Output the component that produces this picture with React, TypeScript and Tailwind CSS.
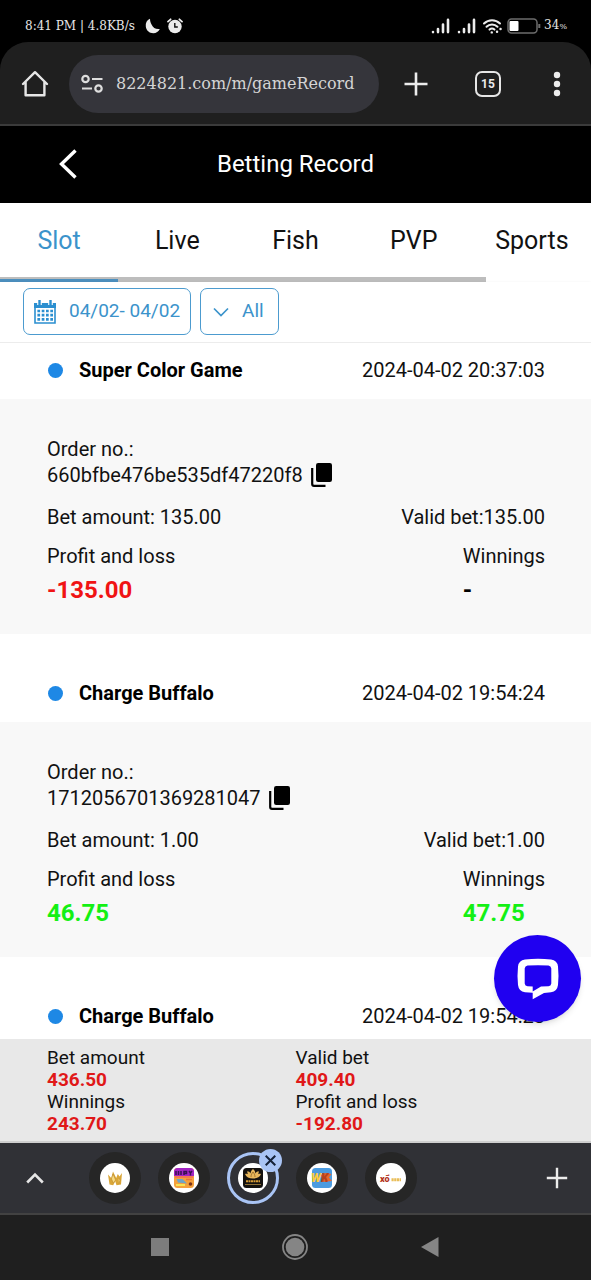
import React from "react";

type GameRecord = {
  game: string;
  time: string;
  order: string;
  bet: string;
  valid: string;
  profit: string;
  winnings: string;
};

const records: GameRecord[] = [
  {
    game: "Super Color Game",
    time: "2024-04-02 20:37:03",
    order: "660bfbe476be535df47220f8",
    bet: "135.00",
    valid: "135.00",
    profit: "-135.00",
    winnings: "-",
  },
  {
    game: "Charge Buffalo",
    time: "2024-04-02 19:54:24",
    order: "1712056701369281047",
    bet: "1.00",
    valid: "1.00",
    profit: "46.75",
    winnings: "47.75",
  },
];

const totals = [
  { label: "Bet amount", value: "436.50" },
  { label: "Valid bet", value: "409.40" },
  { label: "Winnings", value: "243.70" },
  { label: "Profit and loss", value: "-192.80" },
];

const categories = ["Slot", "Live", "Fish", "PVP", "Sports"];

function amountColor(value: string) {
  if (value === "-") return "text-black";
  return value.startsWith("-") ? "text-[#f01414]" : "text-[#14f014]";
}

function SignalIcon() {
  return (
    <svg width="20" height="16" viewBox="0 0 20 16" stroke="#ececec" strokeWidth="2.6" strokeLinecap="round" aria-hidden="true">
      <path d="M2 14v.1M7 11v3.1M12 6.5v7.600M17 1.900v12.200" />
    </svg>
  );
}

function StatusBar() {
  return (
    <div className="flex h-[42px] shrink-0 items-center justify-between pt-[10px] pl-[25px] pr-6 font-['DejaVu_Serif',serif] text-[#e6e6e6]">
      <div className="flex items-center">
        <span className="text-xs leading-4 whitespace-pre">8:41 PM | 4.8KB/s</span>
        <svg className="ml-[10px]" width="16" height="16" viewBox="0 0 16 16" fill="#ececec" aria-hidden="true">
          <path d="M5 .8C1.800 2.200.4 5 .8 8.500c.5 4 3.600 6.700 7.500 6.700 3 0 5.300-1.500 6.500-4.200-3.800.6-6.800-1-8.100-4.200C5.500 4.800 5 2.800 5 .8Z" />
        </svg>
        <svg className="ml-[6px]" width="16" height="16" viewBox="0 0 16 16" aria-hidden="true">
          <circle cx="8" cy="8.500" r="6.700" fill="#ececec" />
          <path d="M1 3.600 3.600 1.300M15 3.600 12.400 1.300" stroke="#ececec" strokeWidth="1.800" strokeLinecap="round" />
          <path d="M7.800 5v4h3" stroke="#111" strokeWidth="1.400" fill="none" />
        </svg>
      </div>
      <div className="flex items-center">
        <SignalIcon />
        <span className="ml-[6px] flex">
          <SignalIcon />
        </span>
        <svg className="ml-[5px]" width="21" height="16" viewBox="0 0 21 16" fill="none" stroke="#ececec" strokeWidth="2" strokeLinecap="round" aria-hidden="true">
          <path d="M2 5.500c4.500-4.500 11.500-4.500 16 0M4.500 8.800c3-3 8-3 11 0M7.500 11.600c1.500-1.400 3.500-1.400 5 0" />
          <path d="M9.700 14.400h.1M15 13.800h.1M18.500 11h.1" strokeWidth="2.400" />
        </svg>
        <svg className="ml-1" width="34" height="16" viewBox="0 0 34 16" aria-hidden="true">
          <rect x="1" y="1" width="29" height="14" rx="3.500" fill="none" stroke="#6c6c6c" strokeWidth="1.500" />
          <rect x="2.500" y="3" width="9" height="10" rx="1" fill="#fff" />
          <path d="M32.300 6v4" stroke="#6c6c6c" strokeWidth="2" />
        </svg>
        <span className="ml-[3px] text-xs leading-4">
          34<span className="text-[8px]">%</span>
        </span>
      </div>
    </div>
  );
}

function BrowserBar() {
  return (
    <div className="flex h-[84px] shrink-0 items-center rounded-t-[28px] border-b-2 border-[#3b3b3b] bg-[#1f1f1f] pt-[2px] pl-[21px] pr-[30px]">
      <button aria-label="Home" className="flex">
        <svg width="28" height="28" viewBox="0 0 28 28" fill="none" stroke="#e6e6e6" strokeWidth="2.400" strokeLinejoin="round" strokeLinecap="round">
          <path d="M2 14 14 2.200 26 14M4.600 12v13.200h18.800V12" />
        </svg>
      </button>
      <label className="ml-5 flex h-[58px] min-w-0 flex-1 items-center rounded-full bg-[#35353b] pl-3 pr-4">
        <svg className="shrink-0" width="23" height="20" viewBox="0 0 23 20" fill="none" stroke="#dedede" strokeWidth="2.200" aria-hidden="true">
          <circle cx="4.500" cy="5" r="3.200" />
          <circle cx="17.500" cy="14.500" r="3.200" />
          <path d="M11 5h10.500M1 14.500h10" />
        </svg>
        <input
          aria-label="Address"
          defaultValue="8224821.com/m/gameRecord"
          className="ml-3 w-full min-w-0 bg-transparent font-['DejaVu_Serif',serif] text-[16px] text-[#d4d4d4] outline-none"
        />
      </label>
      <button aria-label="New tab" className="ml-[25px] flex">
        <svg width="24" height="24" viewBox="0 0 24 24" stroke="#ececec" strokeWidth="2.600">
          <path d="M12 .5v23M.5 12h23" />
        </svg>
      </button>
      <button aria-label="Open tabs" className="ml-[47px] flex h-[26px] w-[26px] items-center justify-center rounded-[7px] border-2 border-[#e6e6e6] font-[Roboto,sans-serif] text-xs font-bold text-[#ececec]">
        15
      </button>
      <button aria-label="Menu" className="ml-[52px] flex">
        <svg width="8" height="26" viewBox="0 0 8 26" fill="#ececec">
          <circle cx="4" cy="4" r="3.200" />
          <circle cx="4" cy="13" r="3.200" />
          <circle cx="4" cy="22" r="3.200" />
        </svg>
      </button>
    </div>
  );
}

function PageHeader() {
  return (
    <header className="grid h-[77px] shrink-0 grid-cols-5 items-center bg-black pb-[2px] text-white">
      <button aria-label="Back" className="ml-[58px] flex w-5">
        <svg width="20" height="30" viewBox="0 0 20 30" fill="none" stroke="#fff" strokeWidth="3.400">
          <path d="M17.500 1.500 3.500 15l14 13.500" />
        </svg>
      </button>
      <h1 className="col-span-3 text-center text-2xl leading-7">Betting Record</h1>
    </header>
  );
}

function CategoryTabs() {
  return (
    <nav className="shrink-0 bg-white">
      <div className="grid h-[74px] grid-cols-5 pt-[2px]">
        {categories.map((name, i) => (
          <button key={name} className={i === 0 ? "text-[25px] text-[#3b93cb]" : "text-[25px] text-[#111111]"}>
            {name}
          </button>
        ))}
      </div>
      <div className="flex h-[5px] w-[82.2%] items-end bg-[#bdbdbd]">
        <div className="h-[3px] w-[24.3%] bg-[#4c8fbe]" />
      </div>
    </nav>
  );
}

function CalendarIcon() {
  return (
    <svg width="22" height="24" viewBox="0 0 22 24" aria-hidden="true">
      <path d="M0 3h22v5H0z" fill="#2b8fd0" />
      <path d="M1 5v18h20V5" fill="none" stroke="#2b8fd0" strokeWidth="1.600" />
      <path d="M5.500 0v5M16.500 0v5" stroke="#fff" strokeWidth="4.600" />
      <path d="M5.500 0v5M16.500 0v5" stroke="#2b8fd0" strokeWidth="2.400" />
      <g stroke="#2b8fd0" strokeWidth="2.700" strokeDasharray="2.700 1.600">
        <path d="M3.400 11h16M3.400 15.200h16M3.400 19.400h16" />
      </g>
    </svg>
  );
}

function Filters() {
  return (
    <div className="flex h-[61px] shrink-0 items-start gap-[9px] border-b border-[#ececec] bg-white pt-[6px] pl-[23px] shadow-sm">
      <button className="flex h-[47px] items-center gap-[13px] rounded-[7px] border border-[#4c9bcf] px-[10px] text-[19px] text-[#3b93cb]">
        <CalendarIcon />
        04/02- 04/02
      </button>
      <label className="flex h-[47px] items-center gap-[13px] rounded-[7px] border border-[#4c9bcf] px-3 text-[#3b93cb]">
        <svg width="16" height="10" viewBox="0 0 16 10" fill="none" stroke="#3b93cb" strokeWidth="1.700" aria-hidden="true">
          <path d="M1 1.500 8 8.500l7-7" />
        </svg>
        <select aria-label="Status" className="appearance-none bg-transparent pr-[2px] text-[19px] outline-none">
          <option>All</option>
        </select>
      </label>
    </div>
  );
}

function RecordHeading({ game, time }: { game: string; time: string }) {
  return (
    <div className="flex h-14 items-center pr-[46px] pl-12 pb-[2px]">
      <span className="mr-4 h-[15px] w-[15px] rounded-full bg-[#1e88e5]" />
      <h2 className="text-[20px] leading-[26px] font-bold">{game}</h2>
      <time className="ml-auto text-[20px] leading-[26px] text-[#111111]">{time}</time>
    </div>
  );
}

function RecordCard({ record }: { record: GameRecord }) {
  return (
    <article className="mb-8">
      <RecordHeading game={record.game} time={record.time} />
      <div className="bg-[#f8f8f8] pr-[46px] pl-[47px] pt-[37px] pb-[31px] text-[20px] leading-[26px] text-[#111111]">
        <p>Order no.:</p>
        <p className="flex items-center gap-2">
          {record.order}
          <button aria-label="Copy order number" className="flex">
            <svg width="21" height="24" viewBox="0 0 21 24">
              <rect x="5" y="0" width="16" height="19" rx="2.200" fill="#000" />
              <path d="M1.200 5v16a1.800 1.800 0 0 0 1.800 1.800h11.500" fill="none" stroke="#000" strokeWidth="2.200" />
            </svg>
          </button>
        </p>
        <div className="mt-4 flex justify-between">
          <span>Bet amount: {record.bet}</span>
          <span>Valid bet:{record.valid}</span>
        </div>
        <div className="mt-[13px] flex justify-between">
          <div>
            <p>Profit and loss</p>
            <p className={`mt-2 text-[24px] font-bold ${amountColor(record.profit)}`}>{record.profit}</p>
          </div>
          <div>
            <p>Winnings</p>
            <p className={`mt-2 text-[24px] font-bold ${amountColor(record.winnings)}`}>{record.winnings}</p>
          </div>
        </div>
      </div>
    </article>
  );
}

function Totals() {
  return (
    <footer className="grid h-[104px] shrink-0 grid-cols-2 content-start border-b-2 border-[#cfcfcf] bg-[#e8e8e8] pt-2">
      {totals.map((t, i) => (
        <div key={t.label} className={i % 2 === 0 ? "pl-[47px]" : ""}>
          <p className="text-[19px] leading-[22px] text-[#111111]">{t.label}</p>
          <p className="text-[19px] leading-[22px] font-bold text-[#e01818]">{t.value}</p>
        </div>
      ))}
    </footer>
  );
}

function CrownFavicon() {
  return (
    <svg width="30" height="30" viewBox="0 0 30 30">
      <circle cx="15" cy="15" r="15" fill="#fff" />
      <path d="M8 11.500 11.200 15l1.800-6.500 3.200 6.500 1.600-4 1.700 2.500L22 10l-1 11.500-4.500.8-1.300-4-2 4L9.500 21.500Z" fill="#d9a638" />
      <path d="m11.500 16 1.500-5 2.500 6-2 3ZM18.500 15l1.500 2-1 3.500" fill="#f7dc86" stroke="#a87418" strokeWidth=".4" />
    </svg>
  );
}

function GameFavicon() {
  return (
    <svg width="30" height="30" viewBox="0 0 30 30">
      <circle cx="15" cy="15" r="15" fill="#fff" />
      <rect x="5" y="5" width="20" height="20" rx="3.500" fill="#f5a13c" />
      <path d="M5 13V8.500A3.500 3.500 0 0 1 8.500 5h13A3.500 3.500 0 0 1 25 8.500V13Z" fill="#a324c4" />
      <path d="M7 8v4M9.500 8v4M12 8v4M15 12V8.500h2.500v2H15M20 8l1.500 2L23 8M21.500 10v2.500" stroke="#381052" strokeWidth="1.500" fill="none" />
      <path d="M6 14h18" stroke="#f26a5a" strokeWidth="1.500" />
      <path d="M7.500 16h6l4.500 4.500-9-1Z" fill="#6ea4c8" />
      <path d="M17 16.500h6" stroke="#e8743a" strokeWidth="1.500" />
      <path d="M7 22h9" stroke="#f8e452" strokeWidth="2" />
      <circle cx="21.500" cy="21" r="1.800" fill="#7b351d" />
    </svg>
  );
}

function LotusFavicon() {
  return (
    <svg width="30" height="30" viewBox="0 0 30 30">
      <circle cx="15" cy="15" r="15" fill="#fff" />
      <rect x="5" y="5" width="20" height="20" rx="3.500" fill="#15120f" />
      <path d="M15 6c1.800 1.500 2.500 3 2.300 4.500 1-1.500 2-2 3.500-2.200 0 1.200-.2 2-.8 2.900 1-.4 2-.4 3-.2-1.200 3.300-4 4.500-8 4.500s-6.800-1.200-8-4.500c1-.2 2-.2 3 .2-.6-.9-.8-1.700-.8-2.900 1.500.2 2.500.7 3.500 2.200C12.500 9 13.200 7.500 15 6Z" fill="#e8b75c" />
      <path d="M13 14c0-2 .8-3.500 2-5 1.200 1.500 2 3 2 5" fill="none" stroke="#8a5c1c" strokeWidth=".7" />
      <path d="M8 18.200h14" stroke="#d99d37" strokeWidth="2" strokeDasharray="2 .5" />
      <path d="M7 21.500h16" stroke="#8f7138" strokeWidth="1" />
    </svg>
  );
}

function WkFavicon() {
  return (
    <svg width="30" height="30" viewBox="0 0 30 30">
      <circle cx="15" cy="15" r="15" fill="#fff" />
      <rect x="5" y="5" width="20" height="20" rx="3.500" fill="#4b9be0" />
      <path d="m14 12 4-2 6.500 1-2.500 3.500 3 3.500-9 1Z" fill="#e8672b" />
      <text x="4" y="19" fontSize="12" fontWeight="900" fontStyle="italic" fontFamily="Roboto, sans-serif" fill="#fbc93b">W</text>
      <text x="14" y="19" fontSize="12" fontWeight="900" fontStyle="italic" fontFamily="Roboto, sans-serif" fill="#b8401e">K</text>
    </svg>
  );
}

function XoFavicon() {
  return (
    <svg width="30" height="30" viewBox="0 0 30 30">
      <circle cx="15" cy="15" r="15" fill="#fff" />
      <text x="4" y="18.500" fontSize="9" fontWeight="900" fontFamily="Roboto, sans-serif" fill="#b3341c">xổ</text>
      <path d="M15.500 16.800h9.500" stroke="#e9bd57" strokeWidth="3" strokeDasharray="2.200 .5" />
    </svg>
  );
}

const siteTabs = [
  { name: "Crown", Icon: CrownFavicon },
  { name: "Games", Icon: GameFavicon },
  { name: "Lotus", Icon: LotusFavicon },
  { name: "WK", Icon: WkFavicon },
  { name: "Lottery", Icon: XoFavicon },
];

function TabStrip() {
  return (
    <div className="flex h-[70px] shrink-0 items-center bg-[#303136] pl-[26px] pr-[23px]">
      <button aria-label="Show tabs" className="flex">
        <svg width="18" height="12" viewBox="0 0 18 12" fill="none" stroke="#e6e6e6" strokeWidth="2.600">
          <path d="M1.200 10.500 9 2.500l7.800 8" />
        </svg>
      </button>
      <div className="ml-[45px] flex gap-[17px]">
        {siteTabs.map(({ name, Icon }, i) => (
          <div key={name} className="relative">
            <button
              aria-label={name}
              className={
                i === 2
                  ? "flex h-[52px] w-[52px] items-center justify-center rounded-full border-[3px] border-[#a9c4f5]"
                  : "flex h-[52px] w-[52px] items-center justify-center rounded-full bg-[#262626]"
              }
            >
              <Icon />
            </button>
            {i === 2 && (
              <button aria-label="Close tab" className="absolute -top-[3px] -right-[3px] flex h-[23px] w-[23px] items-center justify-center rounded-full bg-[#a9c4f5]">
                <svg width="11" height="11" viewBox="0 0 11 11" stroke="#152238" strokeWidth="2">
                  <path d="m.7.7 9.600 9.600M10.300.7.700 10.300" />
                </svg>
              </button>
            )}
          </div>
        ))}
      </div>
      <button aria-label="Add tab" className="ml-auto flex">
        <svg width="22" height="22" viewBox="0 0 22 22" stroke="#ececec" strokeWidth="2.400">
          <path d="M11 .8v20.400M.8 11h20.400" />
        </svg>
      </button>
    </div>
  );
}

function SystemNav() {
  return (
    <div className="flex h-[67px] shrink-0 items-center justify-center gap-[113px] border-t-2 border-[#424242] bg-[#1f1f1f] pr-[2px] pb-[2px]">
      <button aria-label="Recent apps" className="flex">
        <svg width="18" height="18" viewBox="0 0 18 18">
          <path d="M0 0h18v18H0z" fill="#7d7d7d" />
        </svg>
      </button>
      <button aria-label="Home screen" className="flex">
        <svg width="26" height="26" viewBox="0 0 26 26">
          <circle cx="13" cy="13" r="12" fill="none" stroke="#858585" strokeWidth="1.800" />
          <circle cx="13" cy="13" r="9.300" fill="#858585" />
        </svg>
      </button>
      <button aria-label="Go back" className="flex">
        <svg width="18" height="20" viewBox="0 0 18 20">
          <path d="M17.500 0v20L0 10Z" fill="#858585" />
        </svg>
      </button>
    </div>
  );
}

export default function App() {
  return (
    <div className="flex h-screen flex-col bg-black font-[Roboto,sans-serif]">
      <StatusBar />
      <BrowserBar />
      <PageHeader />
      <CategoryTabs />
      <Filters />
      <div className="relative flex min-h-0 flex-1 flex-col">
        <main className="min-h-0 flex-1 overflow-hidden bg-white">
          {records.map((r) => (
            <RecordCard key={r.order} record={r} />
          ))}
          <RecordHeading game="Charge Buffalo" time="2024-04-02 19:54:23" />
        </main>
        <Totals />
        <button aria-label="Open chat" className="absolute right-[10px] bottom-[121px] flex h-[87px] w-[87px] items-center justify-center rounded-full bg-[#2000f0] shadow-md">
          <svg width="42" height="42" viewBox="0 0 42 42">
            <path
              fillRule="evenodd"
              fill="#fff"
              d="M8 1.600Q21 0 34 1.600 40.300 2.500 41 8.500 42 18 41 27 40.200 33.500 34 34.300L27 35 15.700 41.300V34.700L8 34.300Q1.800 33.500 1 27 0 18 1 8.500 1.700 2.500 8 1.600ZM10.500 7.600Q8 7.900 7.700 10.500V25.500Q8 28 10.500 28.200L15.700 28.500V33.500L24 28.500 31.500 28.200Q34 28 34.300 25.500V10.500Q34 7.900 31.500 7.600 21 6.800 10.500 7.600Z"
            />
          </svg>
        </button>
      </div>
      <TabStrip />
      <SystemNav />
    </div>
  );
}
